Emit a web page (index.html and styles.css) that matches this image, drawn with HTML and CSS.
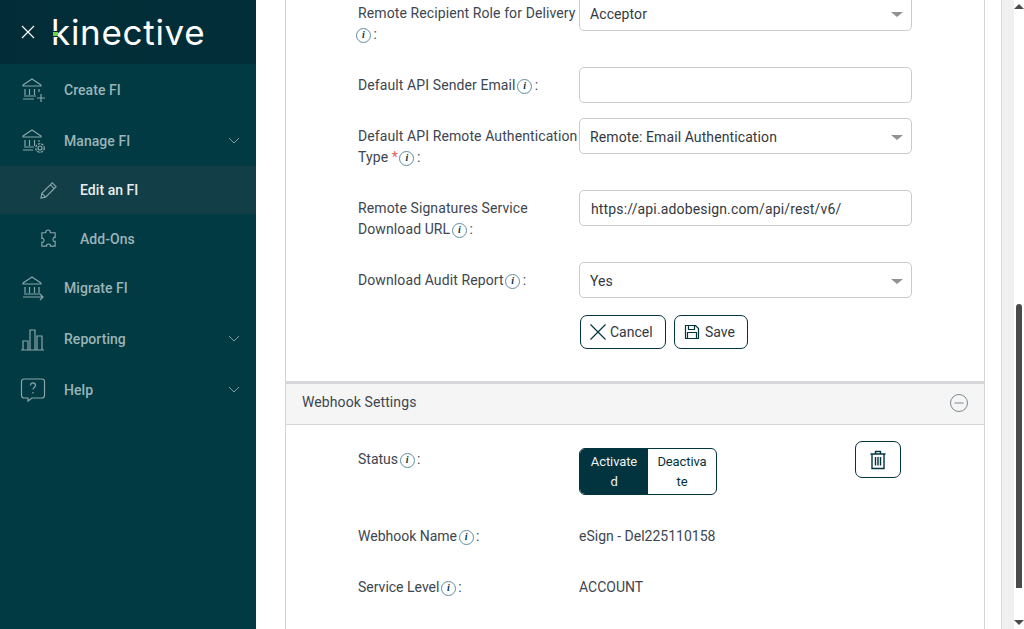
FILE: index.html
```html
<!DOCTYPE html>
<html lang="en">
<head>
<meta charset="utf-8">
<title>Kinective</title>
<link rel="stylesheet" href="styles.css">
</head>
<body>
<aside class="sidebar">
  <header class="brand">
    <svg class="close" viewBox="0 0 14 14"><path d="M1 1l12 12M13 1L1 13"/></svg>
    <div class="logo">kinective<span class="logo-dot"></span></div>
  </header>
  <nav class="nav">
    <a class="item"><svg class="ic" viewBox="0 0 26 26"><path d="M3 8l9-6 9 6v1H3zM5 12v6M9.500 12v6M14.500 12v6M19 12v3M4 19h12M3 22h11M21 17v8M17 21h8"/></svg><span>Create FI</span></a>
    <a class="item"><svg class="ic" viewBox="0 0 26 26"><path d="M3 8l9-6 9 6v1H3zM5 12v6M9.500 12v6M14.500 12v6M19 12v2M4 19h10M3 22h10"/><circle cx="20" cy="20" r="2"/><circle cx="20" cy="20" r="4.300" stroke-dasharray="2.500 1"/></svg><span>Manage FI</span><svg class="chev" viewBox="0 0 12 7"><path d="M1 1l5 5 5-5"/></svg></a>
    <div class="sublist">
      <a class="item sub active"><svg class="ic sm" viewBox="0 0 20 20"><path d="M2 18l1-5L14 2l4 4L7 17zM3 13l4 4M12 4l4 4"/></svg><span>Edit an FI</span></a>
      <a class="item sub"><svg class="ic sm" viewBox="0 0 20 20"><path d="M7 4c0-4 5-4 5 0h5v5c-3-1-3 5 0 4v5h-5c1-3-5-3-4 0H3v-4c3 1 3-5 0-4V4z"/></svg><span>Add-Ons</span></a>
    </div>
    <a class="item"><svg class="ic" viewBox="0 0 26 26"><path d="M3 8l9-6 9 6v1H3zM5 12v6M9.500 12v6M14.500 12v6M19 12v6M4 19h16M3 22h20M20 19l3 3-3 3"/></svg><span>Migrate FI</span></a>
    <a class="item"><svg class="ic" viewBox="0 0 26 26"><path d="M1 24h23M3 24v-9h5v9M10 24V4h5v20M17 24V10h5v14"/></svg><span>Reporting</span><svg class="chev" viewBox="0 0 12 7"><path d="M1 1l5 5 5-5"/></svg></a>
    <a class="item"><svg class="ic" viewBox="0 0 26 26"><path d="M4 2h18a2.500 2.500 0 0 1 2.500 2.500v14a2.500 2.500 0 0 1-2.500 2.500H12l-4 3v-3H4a2.500 2.500 0 0 1-2.500-2.500v-14A2.500 2.500 0 0 1 4 2z"/><path d="M10.500 8.500c0-3.500 5-3.500 5 0 0 2-2.500 2-2.500 4M13 15v1.500"/></svg><span>Help</span><svg class="chev" viewBox="0 0 12 7"><path d="M1 1l5 5 5-5"/></svg></a>
  </nav>
</aside>

<main class="main">
  <section class="panel">
    <div class="form">
      <div class="row h72">
        <div class="label">Remote Recipient Role for Delivery <i class="info">i</i> :</div>
        <div class="field select">Acceptor</div>
      </div>
      <div class="row h51">
        <div class="label">Default API Sender Email <i class="info">i</i> :</div>
        <div class="field"></div>
      </div>
      <div class="row h72">
        <div class="label">Default API Remote Authentication Type <b class="req">*</b> <i class="info">i</i> :</div>
        <div class="field select">Remote: Email Authentication</div>
      </div>
      <div class="row h72">
        <div class="label">Remote Signatures Service Download URL <i class="info">i</i> :</div>
        <div class="field url">https://api.adobesign.com/api/rest/v6/</div>
      </div>
      <div class="row h53">
        <div class="label">Download Audit Report <i class="info">i</i> :</div>
        <div class="field select">Yes</div>
      </div>
      <div class="actions">
        <button class="btn"><svg class="btn-ic" viewBox="0 0 18 18"><path d="M1.500 1.500l15 15M16.500 1.500l-15 15"/></svg>Cancel</button>
        <button class="btn save"><svg class="btn-ic small" viewBox="0 0 16 16"><path d="M1.500 1.500h10l3 3v10h-13zM4.500 1.500v4h6v-4M3.500 14.500v-6h9v6"/></svg>Save</button>
      </div>
    </div>

    <div class="section-head">
      <span>Webhook Settings</span>
      <svg class="minus" viewBox="0 0 20 20"><circle cx="10" cy="10" r="8.500"/><path d="M5.500 10h9"/></svg>
    </div>

    <div class="webhook">
      <div class="status-row">
        <div class="status-label">Status <i class="info">i</i> :</div>
        <div class="toggle"><span class="seg on">Activated</span><span class="seg">Deactivate</span></div>
        <button class="trash"><svg viewBox="0 0 18 20"><path d="M1.500 4h15M6.500 4V1.500h5V4M3 4v14.500h12V4M6.500 7v8.500M9 7v8.500M11.500 7v8.500"/></svg></button>
      </div>
      <div class="info-row"><div>Webhook Name <i class="info">i</i> :</div><div>eSign - Del225110158</div></div>
      <div class="info-row"><div>Service Level <i class="info">i</i> :</div><div>ACCOUNT</div></div>
    </div>
  </section>
</main>

<div class="strip"></div>
<div class="scrollbar">
  <span class="arrow up"></span>
  <span class="thumb"></span>
  <span class="arrow down"></span>
</div>
</body>
</html>
```

FILE: styles.css
```css
* { box-sizing: border-box; }
html, body { height: 100%; }
body {
  margin: 0;
  display: flex;
  height: 629px;
  overflow: hidden;
  background: #fff;
  font-family: Roboto, "Liberation Sans", sans-serif;
  font-size: 14px;
  color: #3d4650;
}

/* Sidebar */
.sidebar { width: 256px; flex: none; background: #013a43; }
.brand {
  height: 64px;
  display: flex;
  align-items: center;
  padding-left: 21px;
  background: linear-gradient(90deg, #022d38, #012e38);
}
.close { width: 14px; height: 14px; fill: none; stroke: #fff; stroke-width: 1.200; }
.logo {
  position: relative;
  margin-left: 16px;
  font-family: Inter, "Open Sans", sans-serif;
  font-weight: 400;
  font-size: 35px;
  line-height: 40px;
  letter-spacing: 0.7px;
  color: #fff;
}
.logo-dot {
  position: absolute;
  left: 2px;
  top: 19px;
  width: 5px;
  height: 6px;
  border-top: 1px solid #022d38;
  border-bottom: 1px solid #022d38;
  background: #6fd33c;
}
.nav { display: flex; flex-direction: column; }
.item {
  height: 51px;
  display: flex;
  align-items: center;
  padding-left: 20px;
  padding-right: 16px;
  color: #9ab4b8;
  font-size: 14px;
  font-weight: 500;
  letter-spacing: 0.05px;
}
.item > span { margin-left: 18px; flex: 1; }
.ic {
  width: 26px;
  height: 26px;
  flex: none;
  fill: none;
  stroke: #8aa5a9;
  stroke-width: 1.200;
}
.ic.sm { width: 19px; height: 19px; }
.chev { width: 12px; height: 7px; fill: none; stroke: #7e9ca1; stroke-width: 1; }
.sub { height: 48px; padding-left: 39px; }
.sub + .sub { padding-top: 1px; }
.sub > span { margin-left: 22px; }
.active { background: #123f47; color: #e8eeef; }

/* Main */
.main { flex: none; width: 745px; height: 629px; padding-left: 29px; overflow: hidden; }
.panel { width: 700px; border-left: 1px solid #d4d4d8; border-right: 1px solid #d4d4d8; }
.form { padding: 0 0 32px 72px; margin-top: -5px; letter-spacing: 0.1px; }
.row { display: grid; grid-template-columns: 221px 333px; }
.h72 { height: 72px; }
.h51 { height: 51px; }
.h53 { height: 53px; }
.label { padding-top: 8px; line-height: 21px; }
.info {
  display: inline-flex;
  align-items: center;
  justify-content: center;
  width: 15px;
  height: 15px;
  margin: 0 -1px 0 -2px;
  border: 1px solid #5f8e9e;
  border-radius: 50%;
  font-family: "Liberation Serif", serif;
  font-size: 10px;
  font-weight: 700;
  font-style: italic;
  line-height: 1;
  color: #023642;
  vertical-align: 1px;
}
.req { color: #e4605e; font-weight: 400; }
.field {
  position: relative;
  height: 36px;
  padding: 0 10px;
  border: 1px solid #c9c9cf;
  border-radius: 5px;
  line-height: 36px;
  color: #33393f;
  background: #fff;
}
.url { padding-left: 11px; letter-spacing: 0.15px; }
.select::after {
  content: "";
  position: absolute;
  right: 8px;
  top: 16px;
  border-left: 6px solid transparent;
  border-right: 6px solid transparent;
  border-top: 5px solid #919191;
}
.actions { display: flex; gap: 8px; padding-left: 222px; }
.btn {
  display: flex;
  align-items: center;
  height: 34px;
  width: 86px;
  padding: 0 0 0 8px;
  border: 1px solid #02343f;
  border-radius: 7px;
  background: #fff;
  font: inherit;
  color: #33393f;
}
.save { width: 74px; padding-left: 9px; }
.btn-ic { width: 18px; height: 18px; margin-right: 3px; fill: none; stroke: #02343f; stroke-width: 1.200; }
.btn-ic.small { width: 16px; height: 16px; margin-right: 5px; }

.section-head {
  height: 44px;
  display: flex;
  align-items: center;
  justify-content: space-between;
  padding: 0 15px 4px 16px;
  border-top: 3px solid #d5d5da;
  border-bottom: 1px solid #d5d5da;
  background: #f5f5f5;
  letter-spacing: 0.1px;
}
.minus { width: 20px; height: 20px; margin-top: 2px; fill: none; stroke: #7c8a92; stroke-width: 1; }

.webhook { padding: 16px 0 60px 72px; }
.status-row { display: flex; align-items: flex-start; height: 70px; }
.status-label { width: 221px; padding-top: 8px; line-height: 21px; }
.toggle {
  display: flex;
  width: 138px;
  margin-top: 7px;
  border: 1px solid #02343f;
  border-radius: 6px;
  overflow: hidden;
}
.seg {
  width: 50%;
  padding: 3px 8.500px 2px;
  font-size: 13px;
  font-weight: 400;
  line-height: 20px;
  letter-spacing: -0.1px;
  text-align: center;
  word-break: break-all;
  color: #02343f;
}
.seg.on { background: #02343f; color: #eef2f3; }
.trash {
  width: 46px;
  height: 37px;
  margin-left: 138px;
  padding: 0;
  display: flex;
  align-items: center;
  justify-content: center;
  border: 1px solid #02343f;
  border-radius: 7px;
  background: #fff;
}
.trash svg { width: 18px; height: 20px; fill: none; stroke: #02343f; stroke-width: 1.400; }
.info-row { display: grid; grid-template-columns: 221px 1fr; height: 51px; padding-top: 15px; line-height: 21px; }

/* Scroll chrome */
.strip { flex: none; width: 13px; border-left: 1px solid #dcdcdc; background: #f0f0f0; }
.scrollbar {
  position: relative;
  flex: none;
  width: 10px;
  display: flex;
  flex-direction: column;
  align-items: center;
}
.thumb { position: absolute; left: 2px; top: 304px; width: 6px; height: 284px; background: #4a4a4a; border-radius: 3px 3px 0 0; }
.arrow { position: absolute; left: 0; border-left: 5px solid transparent; border-right: 5px solid transparent; }
.up { top: 4px; border-bottom: 5px solid #4a4a4a; }
.down { bottom: 4px; border-top: 5px solid #4a4a4a; }
```
